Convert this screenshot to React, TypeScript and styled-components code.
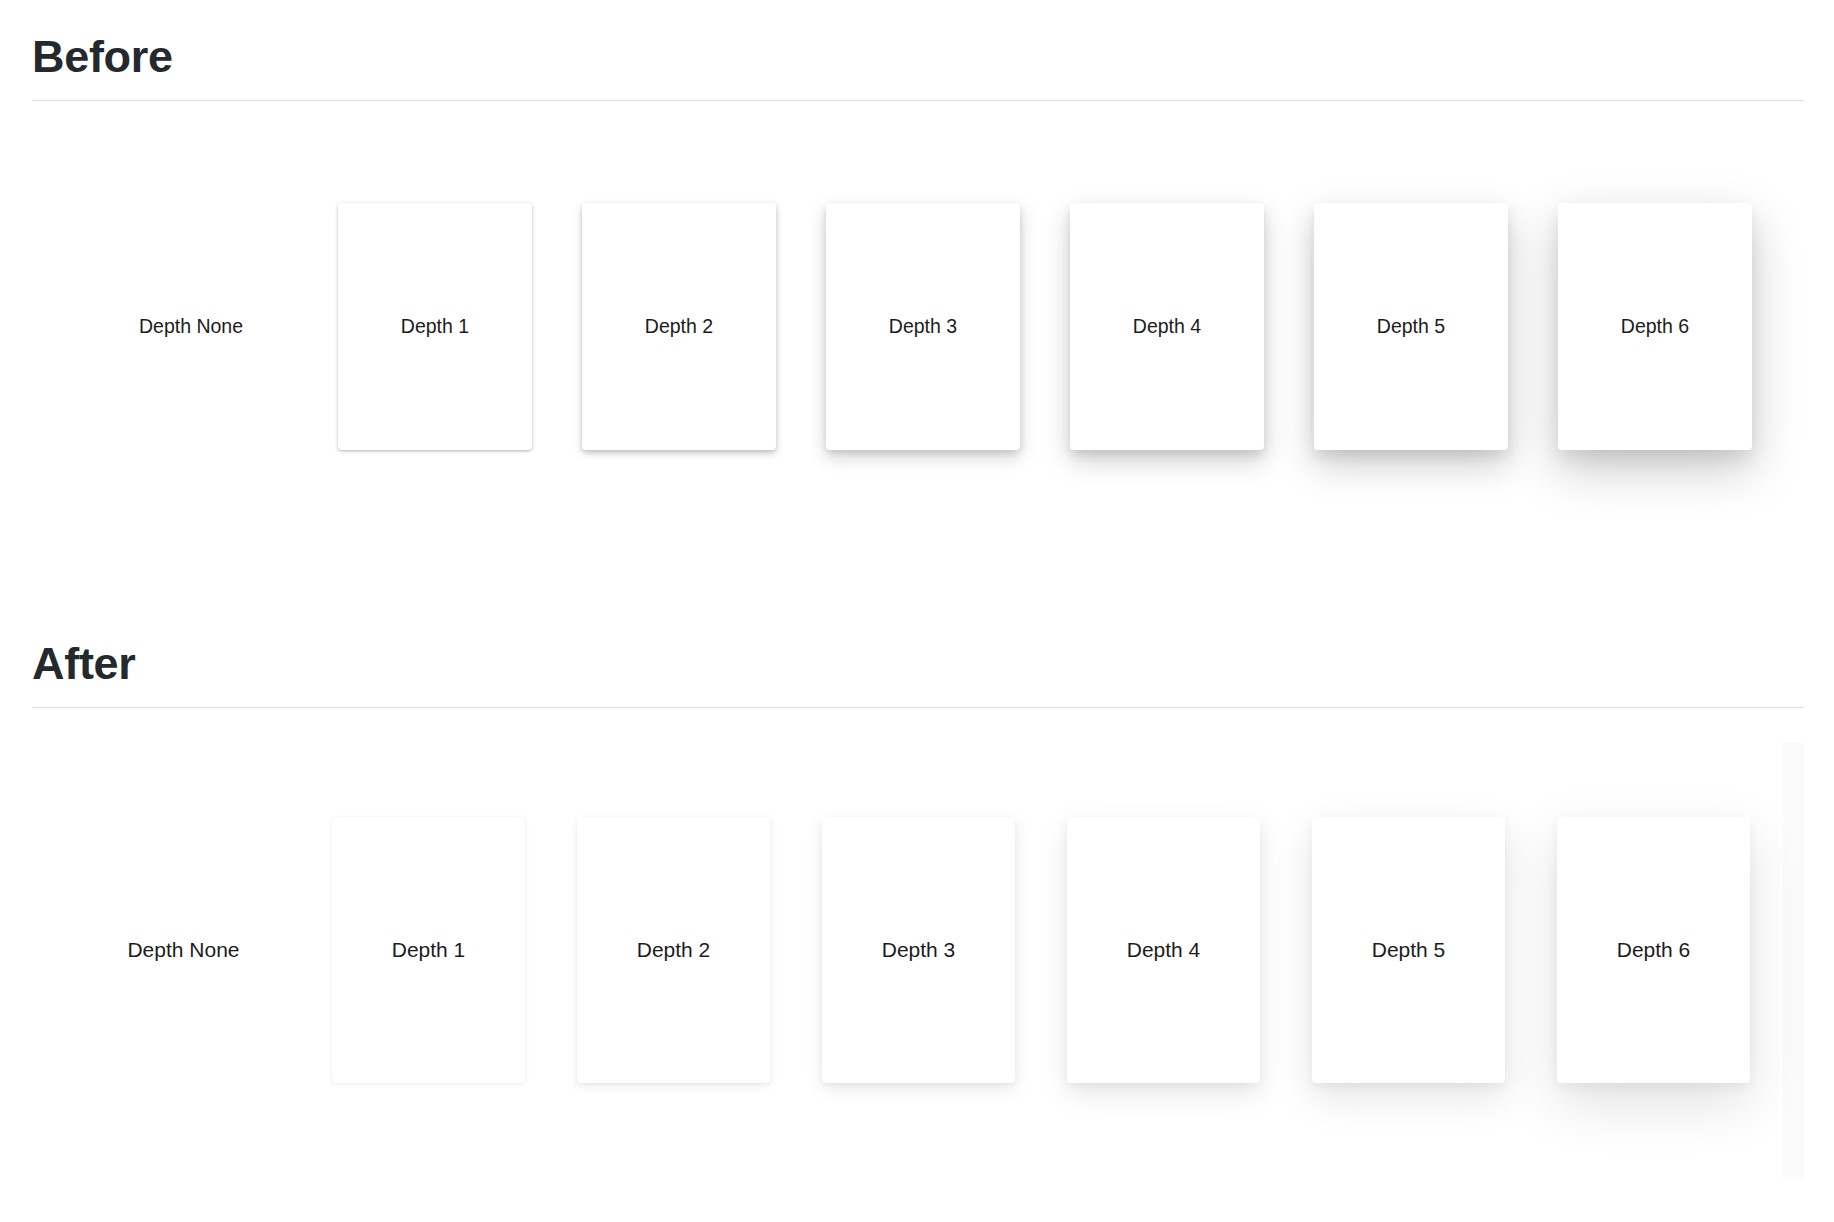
import React from 'react'
import styled, { createGlobalStyle } from 'styled-components'

const GlobalStyle = createGlobalStyle`
  html, body {
    margin: 0;
    padding: 0;
    background: #ffffff;
  }
  body {
    font-family: 'Liberation Sans', Arial, Helvetica, sans-serif;
    color: #1a1a1a;
  }
`

const beforeShadows = [
  'none',
  '0 1px 4px rgba(0,0,0,0.20), 0 1px 2px rgba(0,0,0,0.12)',
  '0 3px 9px rgba(0,0,0,0.18), 0 2px 4px rgba(0,0,0,0.12)',
  '0 7px 18px rgba(0,0,0,0.18), 0 3px 7px rgba(0,0,0,0.11)',
  '0 11px 27px rgba(0,0,0,0.19), 0 5px 10px rgba(0,0,0,0.10)',
  '0 15px 38px rgba(0,0,0,0.20), 0 7px 14px rgba(0,0,0,0.09)',
  '0 19px 50px rgba(0,0,0,0.21), 0 9px 18px rgba(0,0,0,0.08)',
]

const afterShadows = [
  'none',
  '0 1px 4px rgba(0,0,0,0.08), 0 0 1px rgba(0,0,0,0.06)',
  '0 3px 10px rgba(0,0,0,0.08), 0 1px 3px rgba(0,0,0,0.05)',
  '0 6px 18px rgba(0,0,0,0.09), 0 2px 5px rgba(0,0,0,0.05)',
  '0 10px 28px rgba(0,0,0,0.10), 0 3px 8px rgba(0,0,0,0.05)',
  '0 14px 40px rgba(0,0,0,0.11), 0 4px 10px rgba(0,0,0,0.05)',
  '0 20px 56px rgba(0,0,0,0.12), 0 5px 12px rgba(0,0,0,0.05)',
]

const labels = ['Depth None', 'Depth 1', 'Depth 2', 'Depth 3', 'Depth 4', 'Depth 5', 'Depth 6']

type Variant = 'before' | 'after'

const Page = styled.div`
  padding: 30px 30px 0 32px;
`

const Heading = styled.h2<{ $top: number }>`
  margin: ${(p) => p.$top}px 0 0;
  padding: 0 0 17px;
  font-family: 'Liberation Sans', Arial, Helvetica, sans-serif;
  font-weight: 700;
  font-size: 45px;
  line-height: 53px;
  letter-spacing: -0.3px;
  color: #24292e;
  border-bottom: 1px solid #d9dde1;
`

const CardRow = styled.div<{ $variant: Variant }>`
  display: flex;
  flex-direction: row;
  align-items: center;
  gap: ${(p) => (p.$variant === 'before' ? 50 : 52)}px;
  padding-top: ${(p) => (p.$variant === 'before' ? 102 : 0)}px;
  padding-left: ${(p) => (p.$variant === 'before' ? 62 : 55)}px;
`

// faint strip along the right edge of the "after" sample area
const AfterArea = styled.div`
  margin-top: 35px;
  padding-top: 74px;
  padding-bottom: 96px;
  background: linear-gradient(
    to right,
    transparent calc(100% - 21px),
    #fbfbfb calc(100% - 21px)
  );
`

const Card = styled.div<{ $variant: Variant; $shadow: string }>`
  flex: 0 0 auto;
  display: flex;
  align-items: center;
  justify-content: center;
  width: ${(p) => (p.$variant === 'before' ? 194 : 193)}px;
  height: ${(p) => (p.$variant === 'before' ? 247 : 266)}px;
  border-radius: 4px;
  background: #ffffff;
  box-shadow: ${(p) => p.$shadow};
  font-family: 'Liberation Sans', Arial, Helvetica, sans-serif;
  font-size: ${(p) => (p.$variant === 'before' ? 19.5 : 21)}px;
  color: #1c1c1c;
`

const DepthRow = ({ variant }: { variant: Variant }) => {
  const shadows = variant === 'before' ? beforeShadows : afterShadows
  return (
    <CardRow $variant={variant}>
      {labels.map((label, i) => (
        <Card key={label} $variant={variant} $shadow={shadows[i]}>
          {label}
        </Card>
      ))}
    </CardRow>
  )
}

export default function App() {
  return (
    <>
      <GlobalStyle />
      <Page>
        <Heading $top={0}>Before</Heading>
        <DepthRow variant="before" />
        <Heading $top={187}>After</Heading>
        <AfterArea>
          <DepthRow variant="after" />
        </AfterArea>
      </Page>
    </>
  )
}
